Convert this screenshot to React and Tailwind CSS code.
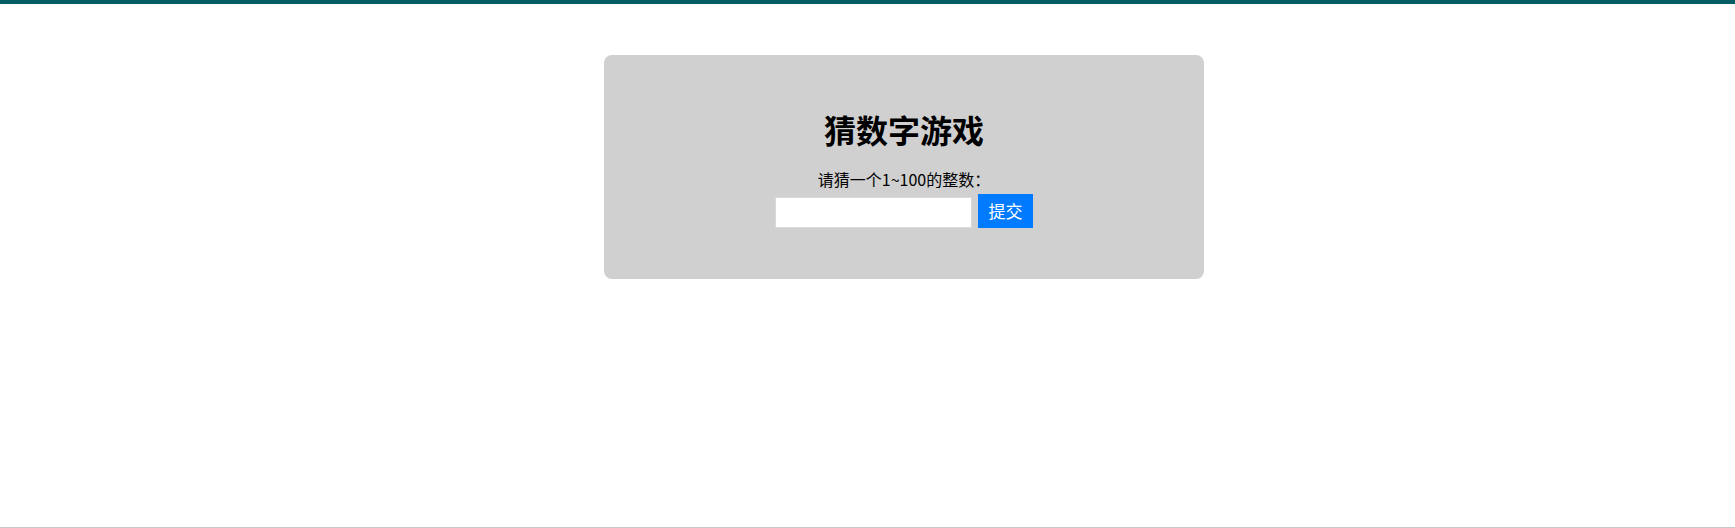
export default function App() {
  return (
    <div
      className="h-[528px] w-full bg-white border-b border-[#c6c6c6] flex flex-col"
      style={{ fontFamily: '"Noto Sans CJK SC", "Liberation Sans", sans-serif' }}
    >
      <div className="h-[4px] w-full bg-[#055c62] shrink-0" />
      <div className="pt-[51px] pl-[604px]">
        <div className="w-[600px] h-[224px] bg-[#d0d0d0] rounded-[8px] pt-[58px] flex flex-col items-center">
          <h1 className="text-[32px] leading-[32px] font-bold text-black">猜数字游戏</h1>
          <div className="mt-[26px] text-[16px] leading-[16px] text-black">请猜一个1~100的整数：</div>
          <div className="mt-[7px] flex items-end gap-[6px]">
            <input
              type="text"
              className="w-[197px] h-[31px] bg-white border border-[#dadada] outline-none px-1 text-[16px]"
            />
            <button className="w-[55px] h-[34px] bg-[#007bff] text-white text-[17px] leading-[34px]">提交</button>
          </div>
        </div>
      </div>
    </div>
  );
}
